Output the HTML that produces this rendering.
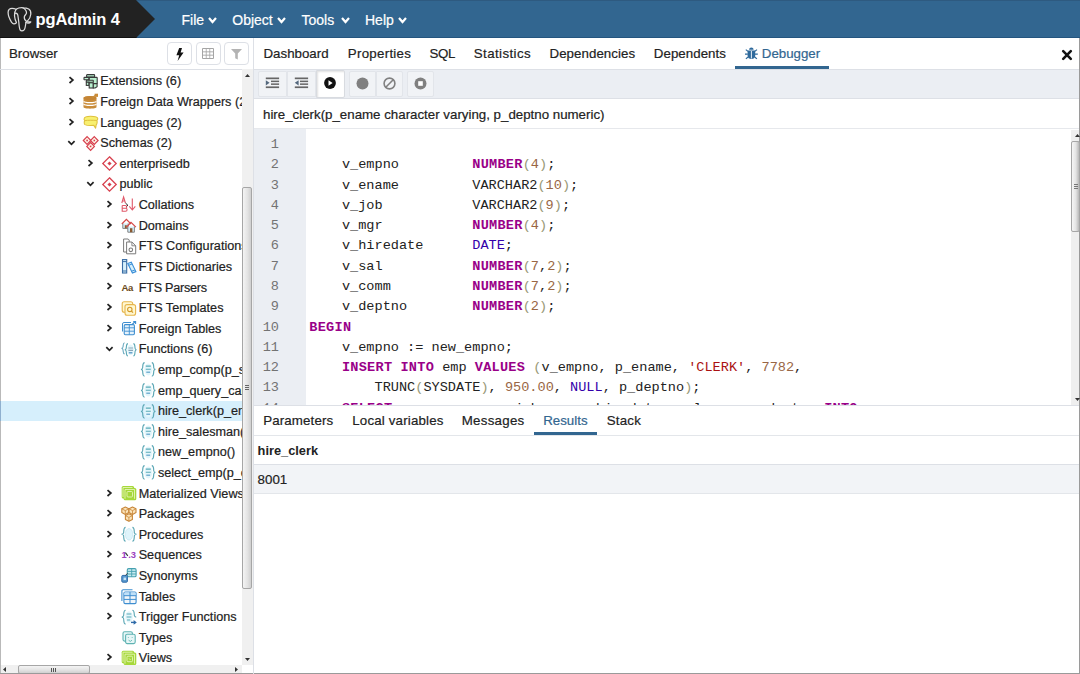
<!DOCTYPE html><html><head><meta charset="utf-8"><style>
*{margin:0;padding:0;box-sizing:border-box}
html,body{width:1080px;height:674px;overflow:hidden;background:#fff;font-family:"Liberation Sans", sans-serif;color:#222}
.a{position:absolute}
.t{position:absolute;white-space:pre;line-height:20px;-webkit-text-stroke:0.2px currentColor}
svg{position:absolute;overflow:visible}
</style></head><body><div class="a" style="left:0;top:0;width:1080px;height:38px;background:#326690"></div>
<div class="a" style="left:0;top:37px;width:1080px;height:1px;background:#24557f"></div>
<div class="a" style="left:0;top:0;width:1080px;height:1px;background:#2e5a80"></div>
<svg style="left:0;top:0" width="160" height="38"><polygon points="0,0 136,0 155,19 136,38 0,38" fill="#222"/><line x1="0" y1="37.5" x2="136.5" y2="37.5" stroke="#111" stroke-width="1"/></svg>
<svg style="left:0;top:0" width="36" height="36" viewBox="0 0 36 36"><g fill="none" stroke="#dcdcdc" stroke-width="1.25" stroke-linejoin="round" stroke-linecap="round">
<path d="M16.2,23 C14.6,24.3 12.6,24 11.6,22.3 C9.6,19.2 8.1,15.6 8.1,12.3 C8.2,9.6 9.9,8.3 12.1,8.3 C13.8,8.3 15.1,8.8 16.1,9.3 C18.2,8 21,7.6 23,7.8 C25,7.8 27.2,8.1 28.7,9 C30.4,10.1 31,12.2 30.8,14.2 C30.6,16.8 29.3,19.3 27.2,21.2"/>
<path d="M16.1,9.3 C14.8,11 14.3,13.3 14.5,15.8 C14.7,18.3 15.3,20.6 16.4,22.4"/>
<path d="M14.7,13.5 C15.9,12.6 17.6,13.3 17.9,15.5 C18.2,17.6 18.5,20 18.8,22 C19,25 19.3,28 20.1,29.9 C20.9,31.2 22.9,31.2 24.1,29.9 C25.3,28.5 25.6,25.2 25.9,22.4"/>
<path d="M23,7.8 C25.1,9 26.6,11 26.5,13.2 C26.1,14.6 24.6,15.1 24.3,16.9 C24.1,18.6 25,20.5 26.7,21.5 C28,22 29.6,21.9 30.8,21.8 C30.1,22.9 29.1,23.2 27.9,23.1 C26.9,23 26.2,22.7 25.9,22.4"/>
</g></svg>
<div class="t" style="left:35.5px;top:9px;font-weight:bold;font-size:16.5px;color:#fff;letter-spacing:-0.1px;-webkit-text-stroke:0">pgAdmin 4</div>
<div class="t" style="left:181.5px;top:9.5px;font-size:14px;color:#fff">File</div>
<svg style="left:207.8px;top:17px" width="9" height="6" viewBox="0 0 9 6"><polyline points="1,1 4.5,5 8,1" fill="none" stroke="#fff" stroke-width="2.2" stroke-linecap="butt" stroke-linejoin="miter"/></svg>
<div class="t" style="left:232.3px;top:9.5px;font-size:14px;color:#fff">Object</div>
<svg style="left:277.2px;top:17px" width="9" height="6" viewBox="0 0 9 6"><polyline points="1,1 4.5,5 8,1" fill="none" stroke="#fff" stroke-width="2.2" stroke-linecap="butt" stroke-linejoin="miter"/></svg>
<div class="t" style="left:301.5px;top:9.5px;font-size:14px;color:#fff">Tools</div>
<svg style="left:340.5px;top:17px" width="9" height="6" viewBox="0 0 9 6"><polyline points="1,1 4.5,5 8,1" fill="none" stroke="#fff" stroke-width="2.2" stroke-linecap="butt" stroke-linejoin="miter"/></svg>
<div class="t" style="left:365px;top:9.5px;font-size:14px;color:#fff">Help</div>
<svg style="left:397.7px;top:17px" width="9" height="6" viewBox="0 0 9 6"><polyline points="1,1 4.5,5 8,1" fill="none" stroke="#fff" stroke-width="2.2" stroke-linecap="butt" stroke-linejoin="miter"/></svg>
<div class="a" style="left:0;top:38px;width:1px;height:636px;background:#b9b9b9"></div>
<div class="t" style="left:9px;top:44px;font-size:13.3px;color:#222">Browser</div>
<div class="a" style="left:0;top:69px;width:253px;height:1px;background:#dde0e6"></div>
<div class="a" style="left:167px;top:42px;width:25px;height:23px;border:1px solid #dde0e6;border-radius:4px;background:#fff"></div>
<div class="a" style="left:196px;top:42px;width:25px;height:23px;border:1px solid #dde0e6;border-radius:4px;background:#fff"></div>
<div class="a" style="left:224px;top:42px;width:25px;height:23px;border:1px solid #dde0e6;border-radius:4px;background:#fff"></div>
<svg style="left:176px;top:47.5px" width="8" height="13" viewBox="0 0 8 13"><path d="M3.2,0 L6,0 L4.6,4.6 L7.6,4.6 L1.6,13 L3.2,7.2 L0.4,7.2 Z" fill="#111"/></svg>
<svg style="left:202px;top:48px" width="12" height="11" viewBox="0 0 12 11"><rect x="0" y="0" width="12" height="11" rx="1" fill="#a5a5a5"/><g fill="#fff"><rect x="1" y="1" width="2.8" height="2.4"/><rect x="4.6" y="1" width="2.8" height="2.4"/><rect x="8.2" y="1" width="2.8" height="2.4"/><rect x="1" y="4.3" width="2.8" height="2.4"/><rect x="4.6" y="4.3" width="2.8" height="2.4"/><rect x="8.2" y="4.3" width="2.8" height="2.4"/><rect x="1" y="7.6" width="2.8" height="2.4"/><rect x="4.6" y="7.6" width="2.8" height="2.4"/><rect x="8.2" y="7.6" width="2.8" height="2.4"/></g></svg>
<svg style="left:231px;top:49px" width="11" height="11" viewBox="0 0 11 11"><path d="M0,0 L11,0 L6.8,4.6 L6.8,10.6 L4.2,9.2 L4.2,4.6 Z" fill="#b3b3b3"/></svg>
<div class="a" style="left:1px;top:69px;width:241px;height:596px;overflow:hidden">
<svg style="left:67.00px;top:7.30px" width="7" height="9" viewBox="0 0 7 9"><polyline points="1.5,1.1 4.9,4.05 1.5,7" fill="none" stroke="#222" stroke-width="1.7"/></svg>
<svg style="left:81.50px;top:4.80px" width="16" height="16" viewBox="0 0 16 16"><g stroke="#3a3a3a" stroke-width="1.1" fill="#b9f0cf"><rect x="3.6" y="0.6" width="8" height="2.4" rx="0.6"/><rect x="6.2" y="3.4" width="8" height="6.2" rx="0.6"/><rect x="1" y="3.4" width="4.8" height="2.4" rx="0.6"/><rect x="3.3" y="6.2" width="7" height="2" rx="0.5"/><rect x="3.3" y="8.2" width="2.7" height="3.2"/><rect x="6.2" y="8.8" width="4.1" height="5.2"/><path d="M10.3,9.6 h3.8 v3.2 l-2,1.2 h-1.8 Z"/></g></svg>
<div class="t" style="left:99.30px;top:2.40px;font-size:12.65px;color:#222;letter-spacing:0px">Extensions (6)</div>
<svg style="left:67.00px;top:27.91px" width="7" height="9" viewBox="0 0 7 9"><polyline points="1.5,1.1 4.9,4.05 1.5,7" fill="none" stroke="#222" stroke-width="1.7"/></svg>
<svg style="left:81.50px;top:25.41px" width="16" height="16" viewBox="0 0 16 16"><path d="M0.5,4 C0.5,1.8 13.5,1.8 13.5,4 L13.5,13 C13.5,15.2 0.5,15.2 0.5,13 Z" fill="#c98c3a"/><ellipse cx="7" cy="4.1" rx="6.5" ry="2.1" fill="#c48535"/><path d="M0.6,7.3 C2,9 12,9 13.4,7.3 M0.6,10.1 C2,11.8 12,11.8 13.4,10.1" fill="none" stroke="#fff" stroke-width="1.1"/><rect x="11.6" y="-0.3" width="3.4" height="3.2" fill="#c98c3a"/><path d="M9.5,3.5 L12.5,1.2" stroke="#c98c3a" stroke-width="1.2"/></svg>
<div class="t" style="left:99.30px;top:23.01px;font-size:12.65px;color:#222;letter-spacing:0px">Foreign Data Wrappers (2)</div>
<svg style="left:67.00px;top:48.52px" width="7" height="9" viewBox="0 0 7 9"><polyline points="1.5,1.1 4.9,4.05 1.5,7" fill="none" stroke="#222" stroke-width="1.7"/></svg>
<svg style="left:81.50px;top:46.02px" width="16" height="16" viewBox="0 0 16 16"><path d="M1.2,3.4 C1.6,1.6 4,1.2 7.5,1.2 C11,1.2 14.5,1.4 14.7,3.3 C14.9,4.3 14.5,5 13.8,5.4 C14.4,6.2 14.2,9 13.2,9.8 L12.6,13.2 L10.8,10.4 C8,10.6 3.6,10.6 2,9.6 C1,8.8 1,6.6 1.8,5.6 C1,5 0.9,4.2 1.2,3.4 Z" fill="#f8f070" stroke="#dfc13e" stroke-width="1.1" stroke-linejoin="round"/><path d="M1.8,5.6 C5,5.2 10,5.2 13.8,5.4" fill="none" stroke="#dfc13e" stroke-width="1"/></svg>
<div class="t" style="left:99.30px;top:43.62px;font-size:12.65px;color:#222;letter-spacing:0px">Languages (2)</div>
<svg style="left:65.50px;top:71.13px" width="9" height="7" viewBox="0 0 9 7"><polyline points="1.3,1.1 4.45,4.3 7.6,1.1" fill="none" stroke="#222" stroke-width="1.7"/></svg>
<svg style="left:81.50px;top:66.63px" width="16" height="16" viewBox="0 0 16 16"><g fill="#fdf6ea" stroke="#d8404e" stroke-width="1.2"><path d="M4.1,0.6 L7.9,4.5 L4.1,8.4 L0.3,4.5 Z"/><path d="M11.3,0.6 L15.1,4.5 L11.3,8.4 L7.5,4.5 Z"/><path d="M7.6,6.5 L11.4,10.4 L7.6,14.3 L3.8,10.4 Z"/></g><g fill="#d8404e"><rect x="3.3" y="3.7" width="1.6" height="1.6"/><rect x="10.5" y="3.7" width="1.6" height="1.6"/><rect x="6.8" y="9.6" width="1.6" height="1.6"/></g></svg>
<div class="t" style="left:99.30px;top:64.23px;font-size:12.65px;color:#222;letter-spacing:0px">Schemas (2)</div>
<svg style="left:86.20px;top:89.74px" width="7" height="9" viewBox="0 0 7 9"><polyline points="1.5,1.1 4.9,4.05 1.5,7" fill="none" stroke="#222" stroke-width="1.7"/></svg>
<svg style="left:100.70px;top:87.24px" width="16" height="16" viewBox="0 0 16 16"><path d="M7.5,0.8 L14.2,7.5 L7.5,14.2 L0.8,7.5 Z" fill="#fff" stroke="#d8404e" stroke-width="1.3"/><path d="M7.5,5.4 L9.6,7.5 L7.5,9.6 L5.4,7.5 Z" fill="#d8404e"/></svg>
<div class="t" style="left:118.50px;top:84.84px;font-size:12.65px;color:#222;letter-spacing:0px">enterprisedb</div>
<svg style="left:84.70px;top:112.35px" width="9" height="7" viewBox="0 0 9 7"><polyline points="1.3,1.1 4.45,4.3 7.6,1.1" fill="none" stroke="#222" stroke-width="1.7"/></svg>
<svg style="left:100.70px;top:107.85px" width="16" height="16" viewBox="0 0 16 16"><path d="M7.5,0.8 L14.2,7.5 L7.5,14.2 L0.8,7.5 Z" fill="#fff" stroke="#d8404e" stroke-width="1.3"/><path d="M7.5,5.4 L9.6,7.5 L7.5,9.6 L5.4,7.5 Z" fill="#d8404e"/></svg>
<div class="t" style="left:118.50px;top:105.45px;font-size:12.65px;color:#222;letter-spacing:0px">public</div>
<svg style="left:105.40px;top:130.96px" width="7" height="9" viewBox="0 0 7 9"><polyline points="1.5,1.1 4.9,4.05 1.5,7" fill="none" stroke="#222" stroke-width="1.7"/></svg>
<svg style="left:119.90px;top:128.46px" width="16" height="16" viewBox="0 0 16 16"><path d="M0.8,6 L2.6,0 L4.4,6 M1.4,4 h2.4" fill="none" stroke="#e05a6a" stroke-width="1.1"/><path d="M1.2,8.5 h3 c2,0 2,2.8 0,2.8 h-3 v-2.8 M1.2,11.3 h3.4 c2,0 2,2.9 0,2.9 h-3.4 Z" fill="none" stroke="#e05a6a" stroke-width="1.1"/><path d="M11.3,1.5 v11.5 M8.3,9.4 l3,3.6 l3,-3.6" fill="none" stroke="#e05a6a" stroke-width="1.1"/><path d="M4.5,6.2 l2.3,1.9 l-0.9,1.2" fill="none" stroke="#222" stroke-width="1"/></svg>
<div class="t" style="left:137.70px;top:126.06px;font-size:12.65px;color:#222;letter-spacing:0px">Collations</div>
<svg style="left:105.40px;top:151.57px" width="7" height="9" viewBox="0 0 7 9"><polyline points="1.5,1.1 4.9,4.05 1.5,7" fill="none" stroke="#222" stroke-width="1.7"/></svg>
<svg style="left:119.90px;top:149.07px" width="16" height="16" viewBox="0 0 16 16"><path d="M1.8,5.5 V10.4 H7.2 V5.5" fill="#d4ecf8" stroke="#777" stroke-width="0.9"/><path d="M0.8,6 L5.4,1.3 L10,6" fill="none" stroke="#d44848" stroke-width="1.2"/><rect x="3.8" y="7.2" width="2" height="3.2" fill="#8a5a30"/><path d="M6.8,8.6 V14.2 H13.4 V8.6" fill="#d4ecf8" stroke="#777" stroke-width="0.9"/><path d="M5.6,9 L10,4.3 L14.9,9.2" fill="none" stroke="#d44848" stroke-width="1.2"/><rect x="9" y="10.2" width="2.4" height="4" fill="#8a5a30"/></svg>
<div class="t" style="left:137.70px;top:146.67px;font-size:12.65px;color:#222;letter-spacing:0px">Domains</div>
<svg style="left:105.40px;top:172.18px" width="7" height="9" viewBox="0 0 7 9"><polyline points="1.5,1.1 4.9,4.05 1.5,7" fill="none" stroke="#222" stroke-width="1.7"/></svg>
<svg style="left:119.90px;top:169.68px" width="16" height="16" viewBox="0 0 16 16"><path d="M2.6,0 h4.6 l1,1 v12 h-5.6 Z" fill="#fff" stroke="#7a7a7a" stroke-width="1"/><path d="M5.6,3 h5.3 l3.8,3.8 v8 h-9.1 Z" fill="#fff" stroke="#7a7a7a" stroke-width="1"/><path d="M10.9,3 v3.8 h3.8" fill="none" stroke="#7a7a7a" stroke-width="0.9"/><circle cx="9.8" cy="10.8" r="1.8" fill="none" stroke="#7a7a7a" stroke-width="1.1"/></svg>
<div class="t" style="left:137.70px;top:167.28px;font-size:12.65px;color:#222;letter-spacing:0px">FTS Configurations</div>
<svg style="left:105.40px;top:192.79px" width="7" height="9" viewBox="0 0 7 9"><polyline points="1.5,1.1 4.9,4.05 1.5,7" fill="none" stroke="#222" stroke-width="1.7"/></svg>
<svg style="left:119.90px;top:190.29px" width="16" height="16" viewBox="0 0 16 16"><rect x="1.5" y="0.6" width="4.2" height="13.4" fill="#d7f0fb" stroke="#3b6ea5" stroke-width="1.1"/><path d="M1.5,2.6 h4.2 M1.5,12 h4.2" stroke="#3b6ea5" stroke-width="1"/><path d="M6.8,4.6 L10.3,3.3 L14.9,12.6 L11.4,14 Z" fill="#d7f0fb" stroke="#3a8fd8" stroke-width="1.1"/><path d="M7.6,6.3 l3.4,-1.3 M10.6,12.2 l3.4,-1.3" stroke="#3a8fd8" stroke-width="1"/></svg>
<div class="t" style="left:137.70px;top:187.89px;font-size:12.65px;color:#222;letter-spacing:0px">FTS Dictionaries</div>
<svg style="left:105.40px;top:213.40px" width="7" height="9" viewBox="0 0 7 9"><polyline points="1.5,1.1 4.9,4.05 1.5,7" fill="none" stroke="#222" stroke-width="1.7"/></svg>
<svg style="left:119.90px;top:210.90px" width="16" height="16" viewBox="0 0 16 16"><text x="0.4" y="11" font-family="Liberation Sans" font-weight="bold" font-size="9.6" fill="#6b4a1a" letter-spacing="-0.3">Aa</text></svg>
<div class="t" style="left:137.70px;top:208.50px;font-size:12.65px;color:#222;letter-spacing:-0.25px">FTS Parsers</div>
<svg style="left:105.40px;top:234.01px" width="7" height="9" viewBox="0 0 7 9"><polyline points="1.5,1.1 4.9,4.05 1.5,7" fill="none" stroke="#222" stroke-width="1.7"/></svg>
<svg style="left:119.90px;top:231.51px" width="16" height="16" viewBox="0 0 16 16"><rect x="1.2" y="0.7" width="10.5" height="10.5" rx="2" fill="#fff7d0" stroke="#e6b54c" stroke-width="1.1"/><rect x="4" y="3.6" width="10.6" height="10.6" rx="2" fill="#fff7d0" stroke="#e6b54c" stroke-width="1.1"/><circle cx="8.8" cy="8.4" r="2.2" fill="none" stroke="#d39a2a" stroke-width="1.1"/><path d="M10.3,10 l1.7,1.7" stroke="#d39a2a" stroke-width="1.2"/></svg>
<div class="t" style="left:137.70px;top:229.11px;font-size:12.65px;color:#222;letter-spacing:0px">FTS Templates</div>
<svg style="left:105.40px;top:254.62px" width="7" height="9" viewBox="0 0 7 9"><polyline points="1.5,1.1 4.9,4.05 1.5,7" fill="none" stroke="#222" stroke-width="1.7"/></svg>
<svg style="left:119.90px;top:252.12px" width="16" height="16" viewBox="0 0 16 16"><path d="M1.5,10.5 V3 a1.5,1.5 0 0 1 1.5,-1.5 H10" fill="none" stroke="#3e8ed0" stroke-width="1"/><rect x="3.2" y="3.6" width="10.2" height="10.2" rx="1.2" fill="#e6f2fb" stroke="#3e8ed0" stroke-width="1.1"/><path d="M3.2,6.8 h10.2 M3.2,10.2 h10.2 M8.3,3.6 v10.2" stroke="#3e8ed0" stroke-width="0.9"/><path d="M11,3.5 L14.4,0.6 M12.2,0.6 h2.4 v2.4" fill="none" stroke="#3e8ed0" stroke-width="1.1"/></svg>
<div class="t" style="left:137.70px;top:249.72px;font-size:12.65px;color:#222;letter-spacing:0px">Foreign Tables</div>
<svg style="left:103.90px;top:277.23px" width="9" height="7" viewBox="0 0 9 7"><polyline points="1.3,1.1 4.45,4.3 7.6,1.1" fill="none" stroke="#222" stroke-width="1.7"/></svg>
<svg style="left:119.90px;top:272.73px" width="16" height="16" viewBox="0 0 16 16"><path d="M3.6,0.7 C1.8,0.9 2.4,3.5 2,5 C1.8,6 1.2,6.3 0.4,6.3 C1.2,6.4 1.8,6.8 2,7.8 C2.3,9.4 1.9,11.7 3.6,11.9" fill="none" stroke="#6aaac0" stroke-width="1.1"/><ellipse cx="9.6" cy="7.8" rx="3.4" ry="5.2" fill="#e3f6fb"/><path d="M6.9,1.6 C5,1.8 5.6,4.6 5.2,6.3 C5,7.3 4.4,7.7 3.8,7.8 C4.4,7.9 5,8.3 5.2,9.3 C5.6,11 5,13.8 6.9,14 M12.4,1.6 C14.3,1.8 13.7,4.6 14.1,6.3 C14.3,7.3 14.9,7.7 15.5,7.8 C14.9,7.9 14.3,8.3 14.1,9.3 C13.7,11 14.3,13.8 12.4,14" fill="none" stroke="#5ba7b5" stroke-width="1.1"/><path d="M7.4,6 h4.6 M7.4,8.4 h4.6" stroke="#8aa6b8" stroke-width="1.2"/><path d="M7.8,10.8 h3.6" stroke="#4a8fc0" stroke-width="1.2"/></svg>
<div class="t" style="left:137.70px;top:270.33px;font-size:12.65px;color:#222;letter-spacing:0px">Functions (6)</div>
<svg style="left:139.10px;top:293.34px" width="16" height="16" viewBox="0 0 16 16"><ellipse cx="8.3" cy="7.4" rx="4" ry="6" fill="#e3f6fb"/><path d="M4.6,0.6 C2.2,0.8 3,4.2 2.6,6 C2.4,6.9 1.8,7.3 1,7.4 C1.8,7.5 2.4,7.9 2.6,8.8 C3,10.6 2.2,14 4.6,14.2 M11.8,0.6 C14.2,0.8 13.4,4.2 13.8,6 C14,6.9 14.6,7.3 15.4,7.4 C14.6,7.5 14,7.9 13.8,8.8 C13.4,10.6 14.2,14 11.8,14.2" fill="none" stroke="#5ba7b5" stroke-width="1.15"/><path d="M5.8,4.1 h5 M5.8,7.2 h5" stroke="#5aaab8" stroke-width="1.15"/><path d="M6.3,10.2 h3.8" stroke="#5a9fc8" stroke-width="1.15"/></svg>
<div class="t" style="left:156.90px;top:290.94px;font-size:12.65px;color:#222;letter-spacing:0px">emp_comp(p_sal numeric, p_comm numeric)</div>
<svg style="left:139.10px;top:313.95px" width="16" height="16" viewBox="0 0 16 16"><ellipse cx="8.3" cy="7.4" rx="4" ry="6" fill="#e3f6fb"/><path d="M4.6,0.6 C2.2,0.8 3,4.2 2.6,6 C2.4,6.9 1.8,7.3 1,7.4 C1.8,7.5 2.4,7.9 2.6,8.8 C3,10.6 2.2,14 4.6,14.2 M11.8,0.6 C14.2,0.8 13.4,4.2 13.8,6 C14,6.9 14.6,7.3 15.4,7.4 C14.6,7.5 14,7.9 13.8,8.8 C13.4,10.6 14.2,14 11.8,14.2" fill="none" stroke="#5ba7b5" stroke-width="1.15"/><path d="M5.8,4.1 h5 M5.8,7.2 h5" stroke="#5aaab8" stroke-width="1.15"/><path d="M6.3,10.2 h3.8" stroke="#5a9fc8" stroke-width="1.15"/></svg>
<div class="t" style="left:156.90px;top:311.55px;font-size:12.65px;color:#222;letter-spacing:0px">emp_query_caller()</div>
<div class="a" style="left:0;top:331.66px;width:241px;height:20px;background:#d6effc"></div>
<svg style="left:139.10px;top:334.56px" width="16" height="16" viewBox="0 0 16 16"><ellipse cx="8.3" cy="7.4" rx="4" ry="6" fill="#e3f6fb"/><path d="M4.6,0.6 C2.2,0.8 3,4.2 2.6,6 C2.4,6.9 1.8,7.3 1,7.4 C1.8,7.5 2.4,7.9 2.6,8.8 C3,10.6 2.2,14 4.6,14.2 M11.8,0.6 C14.2,0.8 13.4,4.2 13.8,6 C14,6.9 14.6,7.3 15.4,7.4 C14.6,7.5 14,7.9 13.8,8.8 C13.4,10.6 14.2,14 11.8,14.2" fill="none" stroke="#5ba7b5" stroke-width="1.15"/><path d="M5.8,4.1 h5 M5.8,7.2 h5" stroke="#5aaab8" stroke-width="1.15"/><path d="M6.3,10.2 h3.8" stroke="#5a9fc8" stroke-width="1.15"/></svg>
<div class="t" style="left:156.90px;top:332.16px;font-size:12.65px;color:#222;letter-spacing:0px">hire_clerk(p_ename character varying, p_deptno numeric)</div>
<svg style="left:139.10px;top:355.17px" width="16" height="16" viewBox="0 0 16 16"><ellipse cx="8.3" cy="7.4" rx="4" ry="6" fill="#e3f6fb"/><path d="M4.6,0.6 C2.2,0.8 3,4.2 2.6,6 C2.4,6.9 1.8,7.3 1,7.4 C1.8,7.5 2.4,7.9 2.6,8.8 C3,10.6 2.2,14 4.6,14.2 M11.8,0.6 C14.2,0.8 13.4,4.2 13.8,6 C14,6.9 14.6,7.3 15.4,7.4 C14.6,7.5 14,7.9 13.8,8.8 C13.4,10.6 14.2,14 11.8,14.2" fill="none" stroke="#5ba7b5" stroke-width="1.15"/><path d="M5.8,4.1 h5 M5.8,7.2 h5" stroke="#5aaab8" stroke-width="1.15"/><path d="M6.3,10.2 h3.8" stroke="#5a9fc8" stroke-width="1.15"/></svg>
<div class="t" style="left:156.90px;top:352.77px;font-size:12.65px;color:#222;letter-spacing:0px">hire_salesman(p_ename character varying)</div>
<svg style="left:139.10px;top:375.78px" width="16" height="16" viewBox="0 0 16 16"><ellipse cx="8.3" cy="7.4" rx="4" ry="6" fill="#e3f6fb"/><path d="M4.6,0.6 C2.2,0.8 3,4.2 2.6,6 C2.4,6.9 1.8,7.3 1,7.4 C1.8,7.5 2.4,7.9 2.6,8.8 C3,10.6 2.2,14 4.6,14.2 M11.8,0.6 C14.2,0.8 13.4,4.2 13.8,6 C14,6.9 14.6,7.3 15.4,7.4 C14.6,7.5 14,7.9 13.8,8.8 C13.4,10.6 14.2,14 11.8,14.2" fill="none" stroke="#5ba7b5" stroke-width="1.15"/><path d="M5.8,4.1 h5 M5.8,7.2 h5" stroke="#5aaab8" stroke-width="1.15"/><path d="M6.3,10.2 h3.8" stroke="#5a9fc8" stroke-width="1.15"/></svg>
<div class="t" style="left:156.90px;top:373.38px;font-size:12.65px;color:#222;letter-spacing:0px">new_empno()</div>
<svg style="left:139.10px;top:396.39px" width="16" height="16" viewBox="0 0 16 16"><ellipse cx="8.3" cy="7.4" rx="4" ry="6" fill="#e3f6fb"/><path d="M4.6,0.6 C2.2,0.8 3,4.2 2.6,6 C2.4,6.9 1.8,7.3 1,7.4 C1.8,7.5 2.4,7.9 2.6,8.8 C3,10.6 2.2,14 4.6,14.2 M11.8,0.6 C14.2,0.8 13.4,4.2 13.8,6 C14,6.9 14.6,7.3 15.4,7.4 C14.6,7.5 14,7.9 13.8,8.8 C13.4,10.6 14.2,14 11.8,14.2" fill="none" stroke="#5ba7b5" stroke-width="1.15"/><path d="M5.8,4.1 h5 M5.8,7.2 h5" stroke="#5aaab8" stroke-width="1.15"/><path d="M6.3,10.2 h3.8" stroke="#5a9fc8" stroke-width="1.15"/></svg>
<div class="t" style="left:156.90px;top:393.99px;font-size:12.65px;color:#222;letter-spacing:0px">select_emp(p_empno numeric)</div>
<svg style="left:105.40px;top:419.50px" width="7" height="9" viewBox="0 0 7 9"><polyline points="1.5,1.1 4.9,4.05 1.5,7" fill="none" stroke="#222" stroke-width="1.7"/></svg>
<svg style="left:119.90px;top:417.00px" width="16" height="16" viewBox="0 0 16 16"><rect x="0.7" y="0.1" width="12.4" height="12.4" rx="1.5" fill="#a6d83a"/><rect x="2.6" y="1.9" width="12.7" height="12.4" rx="1.5" fill="#a6d83a"/><path d="M2,11 V1.5 H11.5 M4,12.8 V3.5 H13.5 V12.8" fill="none" stroke="#e4f5b8" stroke-width="0.9"/><rect x="6" y="5.5" width="5.5" height="5.5" rx="1" fill="none" stroke="#e4f5b8" stroke-width="0.9"/></svg>
<div class="t" style="left:137.70px;top:414.60px;font-size:12.65px;color:#222;letter-spacing:0px">Materialized Views</div>
<svg style="left:105.40px;top:440.11px" width="7" height="9" viewBox="0 0 7 9"><polyline points="1.5,1.1 4.9,4.05 1.5,7" fill="none" stroke="#222" stroke-width="1.7"/></svg>
<svg style="left:119.90px;top:437.61px" width="16" height="16" viewBox="0 0 16 16"><g fill="#fbe3b8" stroke="#c8873a" stroke-width="1.1" stroke-linejoin="round"><path d="M4.3,0 L7.8,1.8 V5.6 L4.3,7.4 L0.8,5.6 V1.8 Z"/><path d="M11.5,0 L15,1.8 V5.6 L11.5,7.4 L8,5.6 V1.8 Z"/><path d="M7.9,6.8 L11.4,8.6 V12.4 L7.9,14.2 L4.4,12.4 V8.6 Z"/></g><path d="M0.8,1.8 L4.3,3.6 L7.8,1.8 M4.3,3.6 V7.4 M8,1.8 L11.5,3.6 L15,1.8 M11.5,3.6 V7.4 M4.4,8.6 L7.9,10.4 L11.4,8.6 M7.9,10.4 V14.2" fill="none" stroke="#c8873a" stroke-width="0.8"/></svg>
<div class="t" style="left:137.70px;top:435.21px;font-size:12.65px;color:#222;letter-spacing:0px">Packages</div>
<svg style="left:105.40px;top:460.72px" width="7" height="9" viewBox="0 0 7 9"><polyline points="1.5,1.1 4.9,4.05 1.5,7" fill="none" stroke="#222" stroke-width="1.7"/></svg>
<svg style="left:119.90px;top:458.22px" width="16" height="16" viewBox="0 0 16 16"><ellipse cx="8" cy="7.3" rx="3.8" ry="5.8" fill="#dff4fb" stroke="#b9e2f0" stroke-width="0.6"/><path d="M4.6,0.4 C2.2,0.6 3,4.1 2.6,5.9 C2.4,6.8 1.8,7.2 0.5,7.3 C1.8,7.4 2.4,7.8 2.6,8.7 C3,10.5 2.2,14 4.6,14.3 M11.4,0.4 C13.8,0.6 13,4.1 13.4,5.9 C13.6,6.8 14.2,7.2 15.5,7.3 C14.2,7.4 13.6,7.8 13.4,8.7 C13,10.5 13.8,14 11.4,14.3" fill="none" stroke="#5ba7b5" stroke-width="1.1"/></svg>
<div class="t" style="left:137.70px;top:455.82px;font-size:12.65px;color:#222;letter-spacing:0px">Procedures</div>
<svg style="left:105.40px;top:481.33px" width="7" height="9" viewBox="0 0 7 9"><polyline points="1.5,1.1 4.9,4.05 1.5,7" fill="none" stroke="#222" stroke-width="1.7"/></svg>
<svg style="left:119.90px;top:478.83px" width="16" height="16" viewBox="0 0 16 16"><text x="0.6" y="10.2" font-family="Liberation Sans" font-weight="bold" font-size="9.4" fill="#9b3fc0">1</text><text x="7.2" y="10.2" font-family="Liberation Sans" font-weight="bold" font-size="9.4" fill="#9b3fc0">.3</text><path d="M4.4,4.6 l2.4,3.2" stroke="#333" stroke-width="1.1"/></svg>
<div class="t" style="left:137.70px;top:476.43px;font-size:12.65px;color:#222;letter-spacing:0px">Sequences</div>
<svg style="left:105.40px;top:501.94px" width="7" height="9" viewBox="0 0 7 9"><polyline points="1.5,1.1 4.9,4.05 1.5,7" fill="none" stroke="#222" stroke-width="1.7"/></svg>
<svg style="left:119.90px;top:499.44px" width="16" height="16" viewBox="0 0 16 16"><rect x="6.3" y="0.6" width="8.8" height="8.2" rx="1.3" fill="#c8ecf0" stroke="#46a0b0" stroke-width="1.1"/><path d="M6.3,3.4 h8.8 M6.3,6 h8.8 M10.7,0.6 v8.2" stroke="#46a0b0" stroke-width="0.9"/><rect x="0.8" y="7.4" width="5.6" height="6.8" rx="1" fill="#5b9bd0" stroke="#2e6aa8" stroke-width="1"/><rect x="2.6" y="9.6" width="2.4" height="2.4" fill="#c8e4f5"/><path d="M4.6,7.4 L6.6,5.2" stroke="#333" stroke-width="0.9"/></svg>
<div class="t" style="left:137.70px;top:497.04px;font-size:12.65px;color:#222;letter-spacing:0px">Synonyms</div>
<svg style="left:105.40px;top:522.55px" width="7" height="9" viewBox="0 0 7 9"><polyline points="1.5,1.1 4.9,4.05 1.5,7" fill="none" stroke="#222" stroke-width="1.7"/></svg>
<svg style="left:119.90px;top:520.05px" width="16" height="16" viewBox="0 0 16 16"><path d="M0.9,12 V2 a1.3,1.3 0 0 1 1.3,-1.3 H11.5" fill="none" stroke="#3e8ed0" stroke-width="1.1"/><rect x="2.9" y="3" width="12.2" height="11.6" rx="1.3" fill="#f2f6fa" stroke="#3e8ed0" stroke-width="1.1"/><rect x="3.4" y="3.5" width="11.2" height="3" fill="#bfe0f8"/><path d="M2.9,6.7 h12.2 M2.9,10.4 h12.2 M9,3 v11.6" stroke="#3e8ed0" stroke-width="1"/></svg>
<div class="t" style="left:137.70px;top:517.65px;font-size:12.65px;color:#222;letter-spacing:0px">Tables</div>
<svg style="left:105.40px;top:543.16px" width="7" height="9" viewBox="0 0 7 9"><polyline points="1.5,1.1 4.9,4.05 1.5,7" fill="none" stroke="#222" stroke-width="1.7"/></svg>
<svg style="left:119.90px;top:540.66px" width="16" height="16" viewBox="0 0 16 16"><ellipse cx="8" cy="7" rx="3.8" ry="5.8" fill="#e3f6fb"/><path d="M4.6,0.2 C2.2,0.4 3,3.9 2.6,5.7 C2.4,6.6 1.8,7 0.8,7.1 C1.8,7.2 2.4,7.6 2.6,8.5 C3,10.3 2.2,13.8 4.6,14.1 M11.4,0.2 C13.8,0.4 13,3.9 13.4,5.7 C13.6,6.6 14.2,7 15.2,7.1" fill="none" stroke="#5ba7b5" stroke-width="1.1"/><path d="M5.6,4 h4.8 M5.6,7 h4.8 M6,10 h3.2" stroke="#5aaab8" stroke-width="1.15"/><path d="M10,12.4 h4.4" stroke="#2e6aa8" stroke-width="1.4"/><path d="M12.6,10 L15.8,12.4 L12.6,14.8 Z" fill="#2e6aa8"/></svg>
<div class="t" style="left:137.70px;top:538.26px;font-size:12.65px;color:#222;letter-spacing:0px">Trigger Functions</div>
<svg style="left:119.90px;top:561.27px" width="16" height="16" viewBox="0 0 16 16"><rect x="2" y="1.7" width="9.4" height="9.4" rx="1.6" fill="#e6f6f6" stroke="#5fb3b3" stroke-width="1.1"/><rect x="4.6" y="4.2" width="9.6" height="9.4" rx="1.6" fill="#e6f6f6" stroke="#5fb3b3" stroke-width="1.1"/><path d="M7.4,7.2 v0.8 M11.2,7.2 v0.8 M7.6,10.2 l1.7,1.2 l1.7,-1.2" fill="none" stroke="#5fb3b3" stroke-width="0.9"/></svg>
<div class="t" style="left:137.70px;top:558.87px;font-size:12.65px;color:#222;letter-spacing:0px">Types</div>
<svg style="left:105.40px;top:584.38px" width="7" height="9" viewBox="0 0 7 9"><polyline points="1.5,1.1 4.9,4.05 1.5,7" fill="none" stroke="#222" stroke-width="1.7"/></svg>
<svg style="left:119.90px;top:581.88px" width="16" height="16" viewBox="0 0 16 16"><rect x="0.7" y="-0.2" width="12.4" height="12.4" rx="1.5" fill="#a6d83a"/><rect x="2.6" y="1.6" width="12.7" height="12.4" rx="1.5" fill="#a6d83a"/><path d="M2,10.8 V1.2 H11.5 M4,12.6 V3.2 H13.5 V12.6" fill="none" stroke="#e4f5b8" stroke-width="0.9"/><rect x="6" y="5.2" width="5.5" height="5.5" rx="1" fill="none" stroke="#e4f5b8" stroke-width="0.9"/><path d="M8,7.4 l1.6,1.6" stroke="#e4f5b8" stroke-width="0.9"/></svg>
<div class="t" style="left:137.70px;top:579.48px;font-size:12.65px;color:#222;letter-spacing:0px">Views</div>
</div>
<div class="a" style="left:0;top:401px;width:1px;height:20px;background:#8fb0cf"></div>
<div class="a" style="left:242px;top:69px;width:11px;height:596px;background:#f0f0f0"></div>
<svg style="left:245px;top:74px" width="5" height="3" viewBox="0 0 5 3"><path d="M0,3 L2.5,0 L5,3 Z" fill="#333"/></svg>
<svg style="left:245px;top:658px" width="5" height="3" viewBox="0 0 5 3"><path d="M0,0 L2.5,3 L5,0 Z" fill="#333"/></svg>
<div class="a" style="left:242px;top:186.5px;width:10px;height:402px;border:1px solid #a6a6a6;border-radius:2px;background:linear-gradient(90deg,#f4f4f4,#e2e2e2 60%,#cfcfcf)"></div>
<div class="a" style="left:245px;top:385px;width:4px;height:1px;background:#666"></div><div class="a" style="left:245px;top:387px;width:4px;height:1px;background:#666"></div><div class="a" style="left:245px;top:389px;width:4px;height:1px;background:#666"></div>
<div class="a" style="left:1px;top:665px;width:241px;height:8px;background:#f0f0f0"></div>
<svg style="left:3px;top:667px" width="3" height="5" viewBox="0 0 3 5"><path d="M3,0 L0,2.5 L3,5 Z" fill="#333"/></svg>
<svg style="left:235px;top:667px" width="3" height="5" viewBox="0 0 3 5"><path d="M0,0 L3,2.5 L0,5 Z" fill="#333"/></svg>
<div class="a" style="left:17.5px;top:665px;width:72.5px;height:9px;border:1px solid #a6a6a6;border-radius:2px;background:linear-gradient(180deg,#f4f4f4,#e2e2e2 60%,#d0d0d0)"></div>
<div class="a" style="left:51px;top:668px;width:1px;height:4px;background:#555"></div><div class="a" style="left:53px;top:668px;width:1px;height:4px;background:#555"></div><div class="a" style="left:55px;top:668px;width:1px;height:4px;background:#555"></div>
<div class="a" style="left:0;top:673px;width:1080px;height:1px;background:#9a9a9a"></div>
<div class="a" style="left:253px;top:38px;width:1px;height:636px;background:#dde0e6"></div>
<div class="a" style="left:1079px;top:38px;width:1px;height:636px;background:#9a9a9a"></div>
<div class="a" style="left:254px;top:69px;width:825px;height:1px;background:#dde0e6"></div>
<div class="t" style="left:263.5px;top:44px;font-size:13.3px;color:#222;letter-spacing:0px">Dashboard</div>
<div class="t" style="left:347.8px;top:44px;font-size:13.3px;color:#222;letter-spacing:0.28px">Properties</div>
<div class="t" style="left:429.5px;top:44px;font-size:13.3px;color:#222;letter-spacing:-0.4px">SQL</div>
<div class="t" style="left:473.8px;top:44px;font-size:13.3px;color:#222;letter-spacing:0.4px">Statistics</div>
<div class="t" style="left:549.5px;top:44px;font-size:13.3px;color:#222;letter-spacing:0.05px">Dependencies</div>
<div class="t" style="left:653.8px;top:44px;font-size:13.3px;color:#222;letter-spacing:0.05px">Dependents</div>
<div class="t" style="left:761.8px;top:44px;font-size:13.3px;color:#326690">Debugger</div>
<svg style="left:745px;top:47px" width="13" height="13" viewBox="0 0 13 13"><g fill="#2f6a9c"><path d="M4.1,2.7 C4.1,-0.2 8.6,-0.2 8.6,2.7 Z"/><path d="M2.6,3.4 H10.2 V8.5 C10.2,11.2 8.5,12 6.4,12 C4.3,12 2.6,11.2 2.6,8.5 Z"/></g><g stroke="#2f6a9c" stroke-width="1.2"><path d="M0.8,2.6 L3,4.4 M12,2.6 L9.8,4.4 M0,7.1 H2.8 M12.8,7.1 H10 M0.9,11.9 L3,10 M11.9,11.9 L9.8,10"/></g><path d="M6.4,4 V11.5" stroke="#fff" stroke-width="0.9"/></svg>
<div class="a" style="left:735px;top:65.5px;width:93.5px;height:3px;background:#326690"></div>
<svg style="left:1061.5px;top:49.5px" width="10" height="10" viewBox="0 0 10 10"><path d="M1.2,1.2 L8.8,8.8 M8.8,1.2 L1.2,8.8" stroke="#111" stroke-width="2.6" stroke-linecap="round"/></svg>
<div class="a" style="left:254px;top:70px;width:825px;height:28px;background:#ebeef3"></div>
<div class="a" style="left:258.3px;top:71px;width:28.5px;height:26px;background:#f1f3f6;border:1px solid #e2e5ea;border-radius:2px 0 0 2px"></div>
<div class="a" style="left:286.5px;top:71px;width:29px;height:26px;background:#f1f3f6;border:1px solid #e2e5ea;border-radius:0"></div>
<div class="a" style="left:315.5px;top:70px;width:29px;height:28px;background:#fff;border:1px solid #d8dbe0;border-radius:0 2px 2px 0;box-shadow:inset 1px 1px 2px rgba(0,0,0,0.12)"></div>
<div class="a" style="left:348.6px;top:71px;width:27.2px;height:26px;background:#f1f3f6;border:1px solid #e2e5ea;border-radius:2px 0 0 2px"></div>
<div class="a" style="left:375.6px;top:71px;width:27.2px;height:26px;background:#f1f3f6;border:1px solid #e2e5ea;border-radius:0 2px 2px 0"></div>
<div class="a" style="left:407px;top:71px;width:27px;height:26px;background:#f1f3f6;border:1px solid #e2e5ea;border-radius:2px"></div>
<svg style="left:265px;top:77px" width="15" height="12" viewBox="0 0 15 12"><g fill="#666"><rect x="0.8" y="0.5" width="13.3" height="1.7"/><rect x="6" y="3.6" width="8.1" height="1.5"/><rect x="6" y="6.4" width="8.1" height="1.5"/><rect x="0.8" y="9.4" width="13.3" height="1.7"/></g><path d="M0.8,3.2 L4.6,5.8 L0.8,8.4 Z" fill="#55697e"/></svg>
<svg style="left:294px;top:77px" width="15" height="12" viewBox="0 0 15 12"><g fill="#666"><rect x="0.8" y="0.5" width="13.3" height="1.7"/><rect x="6" y="3.6" width="8.1" height="1.5"/><rect x="6" y="6.4" width="8.1" height="1.5"/><rect x="0.8" y="9.4" width="13.3" height="1.7"/></g><path d="M4.6,3.2 L0.8,5.8 L4.6,8.4 Z" fill="#55697e"/></svg>
<svg style="left:324.2px;top:77px" width="12" height="12" viewBox="0 0 12 12"><circle cx="6" cy="6" r="5.9" fill="#111"/><path d="M4.5,3.2 L8.6,6 L4.5,8.8 Z" fill="#fff"/></svg>
<svg style="left:355.5px;top:77px" width="13" height="13" viewBox="0 0 13 13"><circle cx="6.5" cy="6.5" r="6" fill="#808080"/></svg>
<svg style="left:382.5px;top:77px" width="13" height="13" viewBox="0 0 13 13"><circle cx="6.5" cy="6.5" r="5.4" fill="none" stroke="#808080" stroke-width="1.6"/><path d="M2.8,10.2 L10.2,2.8" stroke="#808080" stroke-width="1.6"/></svg>
<svg style="left:414px;top:77px" width="13" height="13" viewBox="0 0 13 13"><circle cx="6.5" cy="6.5" r="6" fill="#808080"/><rect x="4.2" y="4.2" width="4.6" height="4.6" fill="#fff"/></svg>
<div class="a" style="left:254px;top:97.5px;width:825px;height:1px;background:#dde0e6"></div>
<div class="t" style="left:263px;top:105px;font-size:13.3px;color:#222">hire_clerk(p_ename character varying, p_deptno numeric)</div>
<div class="a" style="left:254px;top:128px;width:825px;height:1px;background:#e6e8ec"></div>
<div class="a" style="left:254px;top:129px;width:52px;height:276px;background:#ebeef3"></div>
<div class="a" style="left:254px;top:129px;width:815px;height:275.5px;overflow:hidden">
<div class="t" style="left:16.85px;top:6.00px;font-family:'Liberation Mono', monospace;font-size:13.583px;line-height:20px;color:#737373;-webkit-text-stroke:0">1</div>
<div class="t" style="left:55.30px;top:6.00px;font-family:'Liberation Mono', monospace;font-size:13.583px;line-height:20px;-webkit-text-stroke:0"></div>
<div class="t" style="left:16.85px;top:26.28px;font-family:'Liberation Mono', monospace;font-size:13.583px;line-height:20px;color:#737373;-webkit-text-stroke:0">2</div>
<div class="t" style="left:55.30px;top:26.28px;font-family:'Liberation Mono', monospace;font-size:13.583px;line-height:20px;-webkit-text-stroke:0"><span style="color:#222">    v_empno         </span><span style="color:#990088;font-weight:bold;letter-spacing:0.25px">NUMBER</span><span style="color:#999977">(</span><span style="color:#996644">4</span><span style="color:#999977">)</span><span style="color:#222">;</span></div>
<div class="t" style="left:16.85px;top:46.56px;font-family:'Liberation Mono', monospace;font-size:13.583px;line-height:20px;color:#737373;-webkit-text-stroke:0">3</div>
<div class="t" style="left:55.30px;top:46.56px;font-family:'Liberation Mono', monospace;font-size:13.583px;line-height:20px;-webkit-text-stroke:0"><span style="color:#222">    v_ename         VARCHAR2</span><span style="color:#999977">(</span><span style="color:#996644">10</span><span style="color:#999977">)</span><span style="color:#222">;</span></div>
<div class="t" style="left:16.85px;top:66.84px;font-family:'Liberation Mono', monospace;font-size:13.583px;line-height:20px;color:#737373;-webkit-text-stroke:0">4</div>
<div class="t" style="left:55.30px;top:66.84px;font-family:'Liberation Mono', monospace;font-size:13.583px;line-height:20px;-webkit-text-stroke:0"><span style="color:#222">    v_job           VARCHAR2</span><span style="color:#999977">(</span><span style="color:#996644">9</span><span style="color:#999977">)</span><span style="color:#222">;</span></div>
<div class="t" style="left:16.85px;top:87.12px;font-family:'Liberation Mono', monospace;font-size:13.583px;line-height:20px;color:#737373;-webkit-text-stroke:0">5</div>
<div class="t" style="left:55.30px;top:87.12px;font-family:'Liberation Mono', monospace;font-size:13.583px;line-height:20px;-webkit-text-stroke:0"><span style="color:#222">    v_mgr           </span><span style="color:#990088;font-weight:bold;letter-spacing:0.25px">NUMBER</span><span style="color:#999977">(</span><span style="color:#996644">4</span><span style="color:#999977">)</span><span style="color:#222">;</span></div>
<div class="t" style="left:16.85px;top:107.40px;font-family:'Liberation Mono', monospace;font-size:13.583px;line-height:20px;color:#737373;-webkit-text-stroke:0">6</div>
<div class="t" style="left:55.30px;top:107.40px;font-family:'Liberation Mono', monospace;font-size:13.583px;line-height:20px;-webkit-text-stroke:0"><span style="color:#222">    v_hiredate      </span><span style="color:#3300aa">DATE</span><span style="color:#222">;</span></div>
<div class="t" style="left:16.85px;top:127.68px;font-family:'Liberation Mono', monospace;font-size:13.583px;line-height:20px;color:#737373;-webkit-text-stroke:0">7</div>
<div class="t" style="left:55.30px;top:127.68px;font-family:'Liberation Mono', monospace;font-size:13.583px;line-height:20px;-webkit-text-stroke:0"><span style="color:#222">    v_sal           </span><span style="color:#990088;font-weight:bold;letter-spacing:0.25px">NUMBER</span><span style="color:#999977">(</span><span style="color:#996644">7</span><span style="color:#222">,</span><span style="color:#996644">2</span><span style="color:#999977">)</span><span style="color:#222">;</span></div>
<div class="t" style="left:16.85px;top:147.96px;font-family:'Liberation Mono', monospace;font-size:13.583px;line-height:20px;color:#737373;-webkit-text-stroke:0">8</div>
<div class="t" style="left:55.30px;top:147.96px;font-family:'Liberation Mono', monospace;font-size:13.583px;line-height:20px;-webkit-text-stroke:0"><span style="color:#222">    v_comm          </span><span style="color:#990088;font-weight:bold;letter-spacing:0.25px">NUMBER</span><span style="color:#999977">(</span><span style="color:#996644">7</span><span style="color:#222">,</span><span style="color:#996644">2</span><span style="color:#999977">)</span><span style="color:#222">;</span></div>
<div class="t" style="left:16.85px;top:168.24px;font-family:'Liberation Mono', monospace;font-size:13.583px;line-height:20px;color:#737373;-webkit-text-stroke:0">9</div>
<div class="t" style="left:55.30px;top:168.24px;font-family:'Liberation Mono', monospace;font-size:13.583px;line-height:20px;-webkit-text-stroke:0"><span style="color:#222">    v_deptno        </span><span style="color:#990088;font-weight:bold;letter-spacing:0.25px">NUMBER</span><span style="color:#999977">(</span><span style="color:#996644">2</span><span style="color:#999977">)</span><span style="color:#222">;</span></div>
<div class="t" style="left:8.70px;top:188.52px;font-family:'Liberation Mono', monospace;font-size:13.583px;line-height:20px;color:#737373;-webkit-text-stroke:0">10</div>
<div class="t" style="left:55.30px;top:188.52px;font-family:'Liberation Mono', monospace;font-size:13.583px;line-height:20px;-webkit-text-stroke:0"><span style="color:#990088;font-weight:bold;letter-spacing:0.25px">BEGIN</span></div>
<div class="t" style="left:8.70px;top:208.80px;font-family:'Liberation Mono', monospace;font-size:13.583px;line-height:20px;color:#737373;-webkit-text-stroke:0">11</div>
<div class="t" style="left:55.30px;top:208.80px;font-family:'Liberation Mono', monospace;font-size:13.583px;line-height:20px;-webkit-text-stroke:0"><span style="color:#222">    v_empno := new_empno;</span></div>
<div class="t" style="left:8.70px;top:229.08px;font-family:'Liberation Mono', monospace;font-size:13.583px;line-height:20px;color:#737373;-webkit-text-stroke:0">12</div>
<div class="t" style="left:55.30px;top:229.08px;font-family:'Liberation Mono', monospace;font-size:13.583px;line-height:20px;-webkit-text-stroke:0"><span style="color:#222">    </span><span style="color:#990088;font-weight:bold;letter-spacing:0.25px">INSERT</span><span style="color:#222"> </span><span style="color:#990088;font-weight:bold;letter-spacing:0.25px">INTO</span><span style="color:#222"> emp </span><span style="color:#990088;font-weight:bold;letter-spacing:0.25px">VALUES</span><span style="color:#222"> </span><span style="color:#999977">(</span><span style="color:#222">v_empno, p_ename, </span><span style="color:#aa1111">&#x27;CLERK&#x27;</span><span style="color:#222">, </span><span style="color:#996644">7782</span><span style="color:#222">,</span></div>
<div class="t" style="left:8.70px;top:249.36px;font-family:'Liberation Mono', monospace;font-size:13.583px;line-height:20px;color:#737373;-webkit-text-stroke:0">13</div>
<div class="t" style="left:55.30px;top:249.36px;font-family:'Liberation Mono', monospace;font-size:13.583px;line-height:20px;-webkit-text-stroke:0"><span style="color:#222">        TRUNC</span><span style="color:#999977">(</span><span style="color:#222">SYSDATE</span><span style="color:#999977">)</span><span style="color:#222">, </span><span style="color:#996644">950.00</span><span style="color:#222">, </span><span style="color:#3300aa">NULL</span><span style="color:#222">, p_deptno</span><span style="color:#999977">)</span><span style="color:#222">;</span></div>
<div class="t" style="left:8.70px;top:269.64px;font-family:'Liberation Mono', monospace;font-size:13.583px;line-height:20px;color:#737373;-webkit-text-stroke:0">14</div>
<div class="t" style="left:55.30px;top:269.64px;font-family:'Liberation Mono', monospace;font-size:13.583px;line-height:20px;-webkit-text-stroke:0"><span style="color:#222">    </span><span style="color:#990088;font-weight:bold;letter-spacing:0.25px">SELECT</span><span style="color:#222"> empno, ename, job, mgr, hiredate, sal, comm, deptno </span><span style="color:#990088;font-weight:bold;letter-spacing:0.25px">INTO</span></div>
</div>
<div class="a" style="left:1071px;top:129.5px;width:8px;height:275px;background:#efefef"></div>
<svg style="left:1075px;top:134px" width="5" height="3" viewBox="0 0 5 3"><path d="M0,3 L2.5,0 L5,3 Z" fill="#333"/></svg>
<svg style="left:1075px;top:398px" width="5" height="3" viewBox="0 0 5 3"><path d="M0,0 L2.5,3 L5,0 Z" fill="#333"/></svg>
<div class="a" style="left:1071px;top:141px;width:9px;height:90.5px;border:1px solid #a6a6a6;border-radius:2px;background:linear-gradient(90deg,#f6f6f6,#e4e4e4 55%,#b8b8b8)"></div>
<div class="a" style="left:1074px;top:184px;width:4px;height:1px;background:#777"></div><div class="a" style="left:1074px;top:186px;width:4px;height:1px;background:#777"></div><div class="a" style="left:1074px;top:188px;width:4px;height:1px;background:#777"></div>
<div class="a" style="left:254px;top:404.5px;width:825px;height:1px;background:#dde0e6"></div>
<div class="t" style="left:263.3px;top:410.5px;font-size:13.3px;color:#222;letter-spacing:0.12px">Parameters</div>
<div class="t" style="left:352.3px;top:410.5px;font-size:13.3px;color:#222;letter-spacing:0.17px">Local variables</div>
<div class="t" style="left:461.7px;top:410.5px;font-size:13.3px;color:#222;letter-spacing:0.28px">Messages</div>
<div class="t" style="left:543.2px;top:410.5px;font-size:13.3px;color:#326690;letter-spacing:0px">Results</div>
<div class="t" style="left:606.8px;top:410.5px;font-size:13.3px;color:#222;letter-spacing:0.2px">Stack</div>
<div class="a" style="left:533.7px;top:432.3px;width:63.5px;height:2.5px;background:#326690"></div>
<div class="a" style="left:254px;top:435px;width:825px;height:1px;background:#e3e6ea"></div>
<div class="t" style="left:257.6px;top:440.5px;font-size:12.8px;font-weight:bold;color:#222;-webkit-text-stroke:0">hire_clerk</div>
<div class="a" style="left:254px;top:464.3px;width:825px;height:1px;background:#dde0e6"></div>
<div class="a" style="left:254px;top:465.3px;width:825px;height:27.7px;background:#f2f4f7"></div>
<div class="t" style="left:257.6px;top:469.5px;font-size:13.3px;color:#222">8001</div>
<div class="a" style="left:254px;top:493px;width:825px;height:1px;background:#e3e6ea"></div></body></html>
